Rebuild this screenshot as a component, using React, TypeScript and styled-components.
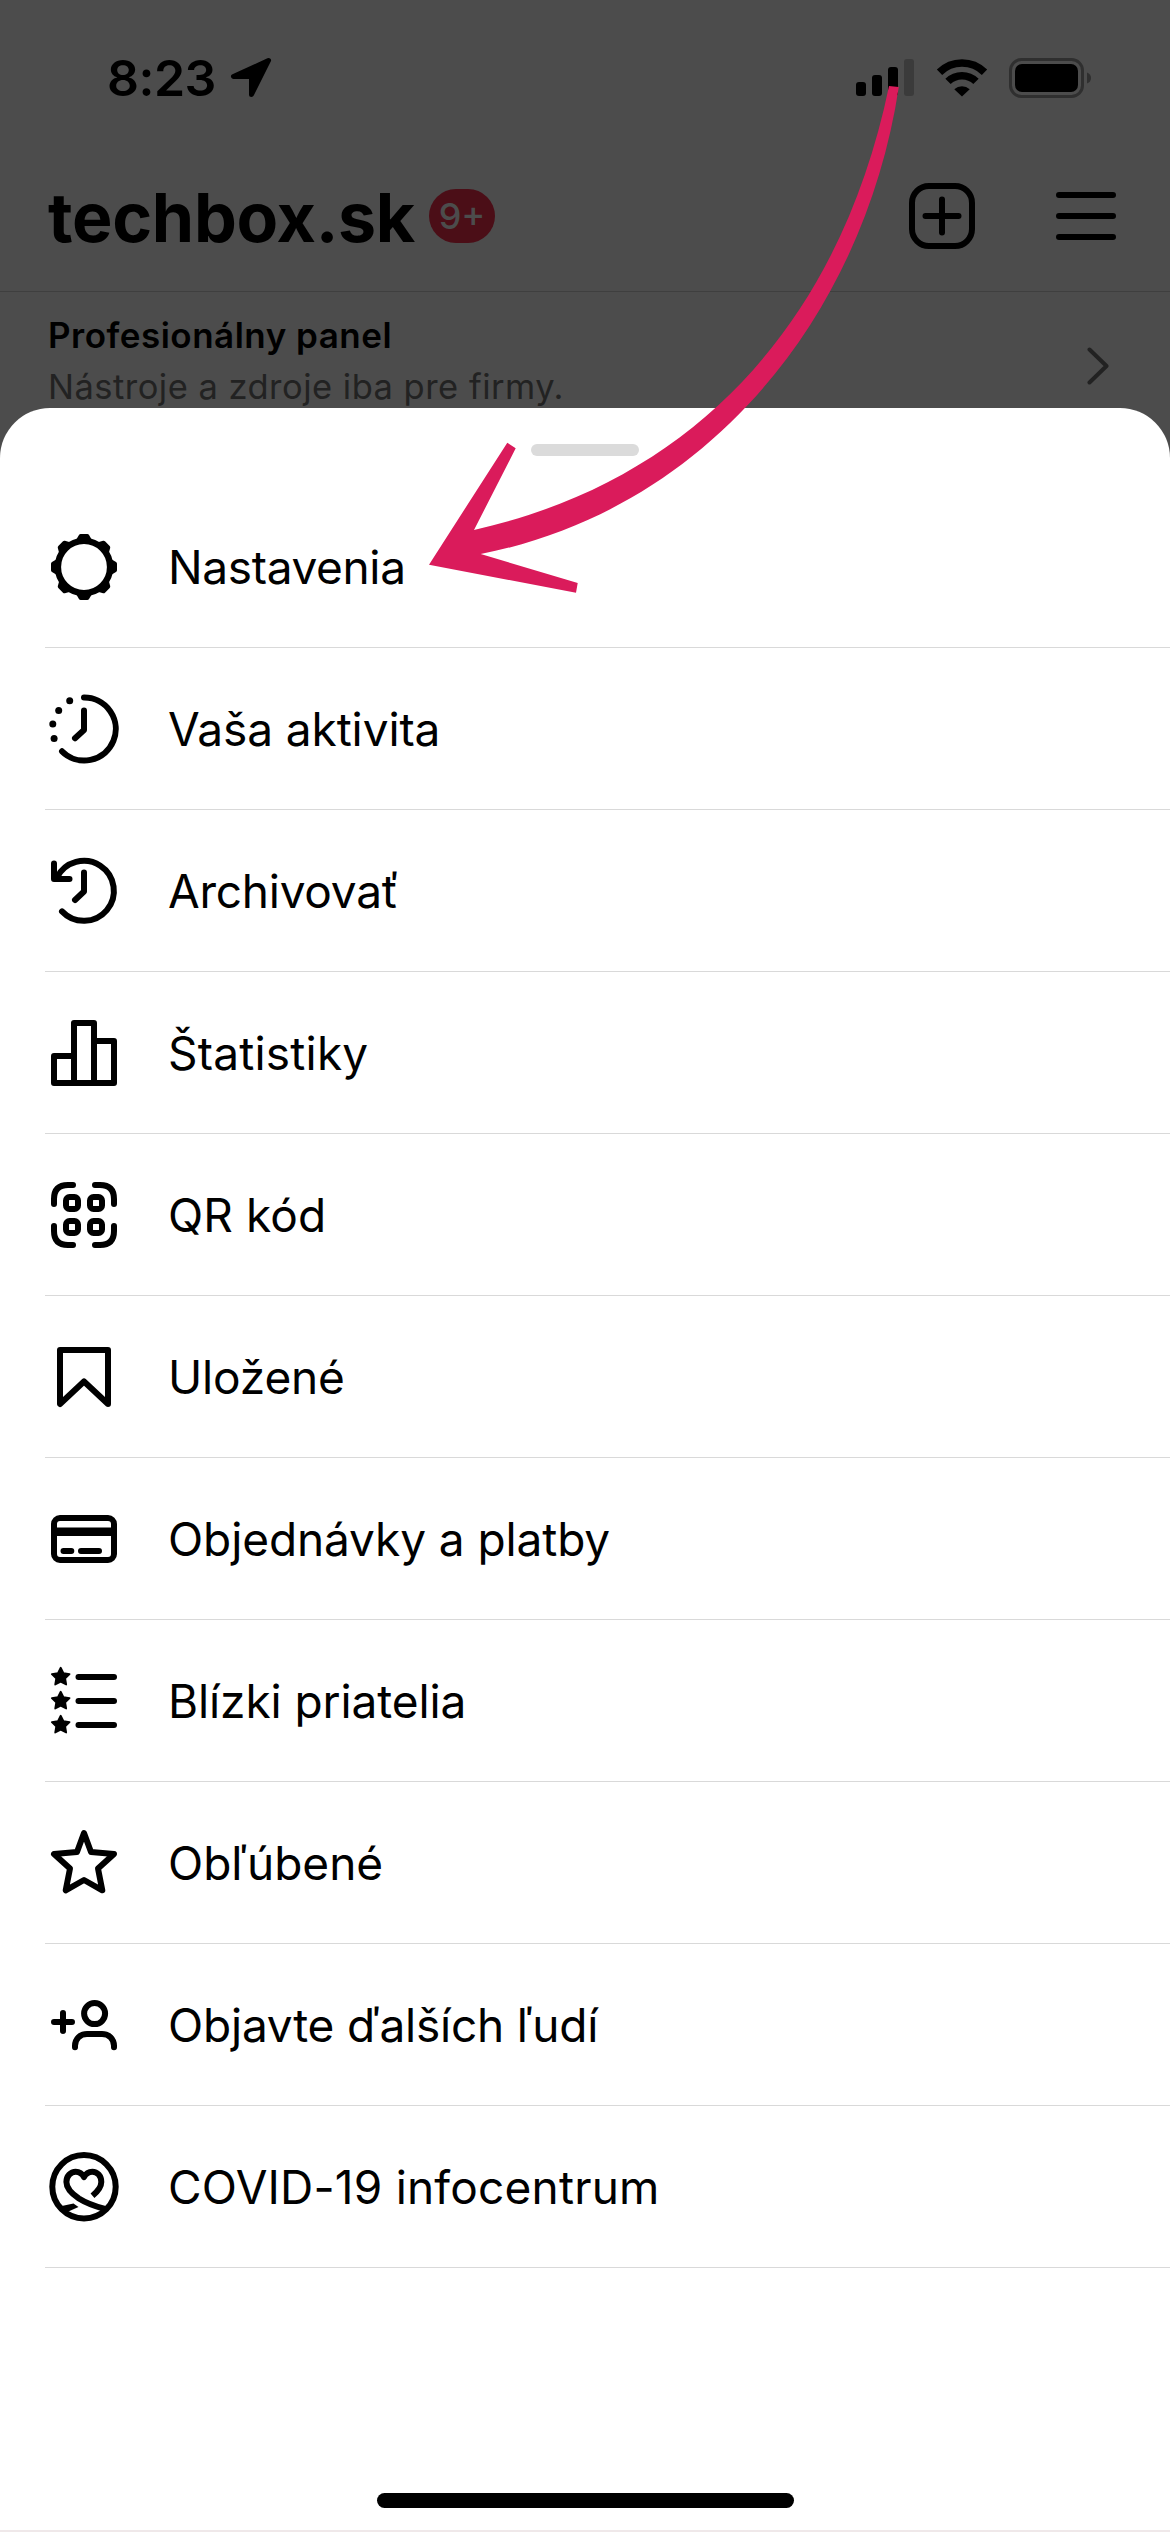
import React from 'react';
import styled, { createGlobalStyle } from 'styled-components';

const GlobalStyle = createGlobalStyle`
  * { box-sizing: border-box; }
  body { margin: 0; background: #4c4c4c; }
`;

const Screen = styled.div`
  position: relative;
  display: flex;
  flex-direction: column;
  width: 1170px;
  height: 2532px;
  overflow: hidden;
  background: #4c4c4c;
  color: #000;
  font-family: Inter, 'Liberation Sans', sans-serif;
`;

const Backdrop = styled.div`
  display: flex;
  flex-direction: column;
  flex: none;
  height: 408px;
  overflow: hidden;
`;

const StatusBar = styled.div`
  display: flex;
  flex: none;
  align-items: center;
  justify-content: space-between;
  height: 156px;
  padding: 0 78px 0 107px;
`;

const StatusGroup = styled.div<{ $gap: number }>`
  display: flex;
  align-items: center;
  gap: ${(p) => p.$gap}px;
`;

const Clock = styled.span`
  font-size: 50px;
  font-weight: 600;
  line-height: 60px;
  letter-spacing: -0.5px;
`;

const Header = styled.header`
  display: flex;
  flex: none;
  align-items: center;
  justify-content: space-between;
  height: 136px;
  padding: 0 54px 15px 48px;
  border-bottom: 1px solid #3f3f3f;
`;

const Account = styled.div`
  display: flex;
  align-items: center;
  gap: 14px;
`;

const AccountName = styled.h1`
  margin: 0;
  padding-top: 2px;
  font-size: 68px;
  font-weight: 700;
  line-height: 80px;
  letter-spacing: -0.3px;
`;

const Badge = styled.span`
  display: flex;
  align-items: center;
  justify-content: center;
  width: 66px;
  height: 54px;
  border-radius: 27px;
  background: #4b0e17;
  color: #4c4c4c;
  font-size: 36px;
  font-weight: 500;
`;

const Actions = styled.div`
  display: flex;
  align-items: center;
  gap: 81px;
`;

const Panel = styled.section`
  display: flex;
  flex: 1;
  align-items: flex-start;
  justify-content: space-between;
  padding: 18px 61px 0 48px;
`;

const PanelText = styled.div`
  display: flex;
  flex-direction: column;
`;

const PanelTitle = styled.span`
  font-size: 35px;
  font-weight: 600;
  line-height: 51px;
  letter-spacing: 0.5px;
`;

const PanelNote = styled.span`
  color: #222;
  font-size: 34.5px;
  line-height: 51px;
  letter-spacing: 0.48px;
`;

const Sheet = styled.main`
  display: flex;
  flex-direction: column;
  align-items: center;
  flex: 1;
  border-radius: 50px 50px 0 0;
  border-bottom: 2px solid #efe8e9;
  background: #fff;
`;

const Handle = styled.div`
  flex: none;
  width: 108px;
  height: 12px;
  margin: 36px 0 30px;
  border-radius: 6px;
  background: #dbdbdb;
`;

const Menu = styled.ul`
  flex: 1;
  width: 100%;
  margin: 0;
  padding: 0 0 0 45px;
  list-style: none;
`;

const MenuItem = styled.li`
  display: flex;
  align-items: center;
  gap: 48px;
  height: 162px;
  padding: 1px 0 0 3px;
  border-bottom: 1px solid #d9d9d9;
`;

const Label = styled.span<{ $track: number }>`
  font-size: 46px;
  line-height: 60px;
  letter-spacing: ${(p) => p.$track}px;
  white-space: nowrap;
`;

const HomeIndicator = styled.div`
  flex: none;
  width: 417px;
  height: 15px;
  margin-bottom: 22px;
  border-radius: 8px;
  background: #000;
`;

const LineIcon = styled.svg`
  flex: none;
  display: block;
  fill: none;
  stroke: #000;
  stroke-width: 6;
  stroke-linecap: round;
  stroke-linejoin: round;
`;

const Glyph = styled.svg`
  flex: none;
  display: block;
`;

const Chevron = styled(Glyph)`
  margin-top: 37px;
`;

const Annotation = styled.svg`
  position: absolute;
  top: 0;
  left: 0;
  pointer-events: none;
`;

const starPoints = (cx: number, cy: number, outer: number, inner: number) =>
  Array.from({ length: 10 }, (_, i) => {
    const r = i % 2 ? inner : outer;
    const a = (i * Math.PI) / 5;
    return `${(cx + r * Math.sin(a)).toFixed(2)},${(cy - r * Math.cos(a)).toFixed(2)}`;
  }).join(' ');

const icons: Record<string, React.ReactNode> = {
  gear: (
    <>
      <circle cx="36" cy="36" r="26.1" strokeWidth="6.4" />
      {[0, 45, 90, 135, 180, 225, 270, 315].map((a) => (
        <path
          key={a}
          d="M32.7 5h6.6l2.6 4.6 1 .8H29l1-.8Z"
          fill="#000"
          strokeWidth="4"
          transform={`rotate(${a} 36 36)`}
        />
      ))}
    </>
  ),
  activity: (
    <>
      <path d="M36 4.5A31.5 31.5 0 1 1 14 58.3" />
      <path d="M36 17.5V37l-9 8.3" />
      <g fill="#000" stroke="none">
        <circle cx="21.7" cy="7.7" r="3.5" />
        <circle cx="10.7" cy="17.4" r="3.5" />
        <circle cx="4.8" cy="31" r="3.5" />
        <circle cx="6.1" cy="45.5" r="3.5" />
      </g>
    </>
  ),
  archive: (
    <>
      <path d="M9 22.5A30 30 0 1 1 14 56.4" />
      <path d="M6 8.5V24h15.5" />
      <path d="M36 17.5v19L27 45" />
    </>
  ),
  stats: (
    <>
      <path d="M6 39h20v27H6Z" />
      <path d="M26 6h20v60H26Z" />
      <path d="M46 24h20v42H46Z" />
    </>
  ),
  qr: (
    <>
      <path d="M6 25v-5Q6 6 20 6h5M47 6h5q14 0 14 14v5M66 47v5q0 14-14 14h-5M25 66h-5Q6 66 6 52v-5" />
      <rect x="18" y="18" width="12" height="12" rx="3.5" />
      <rect x="42" y="18" width="12" height="12" rx="3.5" />
      <rect x="18" y="42" width="12" height="12" rx="3.5" />
      <rect x="42" y="42" width="12" height="12" rx="3.5" />
    </>
  ),
  bookmark: <path d="M12 9h48v54L36 40.5 12 63Z" />,
  card: (
    <>
      <rect x="6" y="15" width="60" height="42" rx="6" />
      <path d="M6 28.8h60" strokeWidth="8.4" strokeLinecap="butt" />
      <path d="M15.5 48h7.8M33 48h18" />
    </>
  ),
  friends: (
    <>
      {[12, 36, 60].map((y) => (
        <React.Fragment key={y}>
          <path d={`M30.5 ${y}H66`} />
          <polygon
            points={starPoints(12.7, y, 9.3, 4.7)}
            fill="#000"
            style={{ strokeWidth: 1.8 }}
          />
        </React.Fragment>
      ))}
    </>
  ),
  star: (
    <path d="M36 6l7 19 23 2-16 14.5 4.3 21.8L36 53 17.7 63.3 22 41.5 6 27l23-2Z" />
  ),
  discover: (
    <>
      <path d="M6 33h18M15 24v18" />
      <circle cx="46.6" cy="24.6" r="10.5" />
      <path d="M27 58.2v-1.4C27 50 32 45 39 45h15c7 0 12 5 12 11.8v1.4" />
    </>
  ),
  covid: (
    <>
      <circle cx="36" cy="35.8" r="31.7" />
      <path
        d="M44.5 44.8C49 41 53.3 37 53.3 31c0-6-4-10.3-9-10.3-4 0-6.5 2-8.3 5.3-1.8-3.3-4.3-5.3-8.3-5.3-5 0-9.3 4.3-9.3 10.3 0 7 6.500 12.5 12.5 16.5C38 52 46 55 57 58"
        strokeLinecap="butt"
      />
      <path d="M9 56l16.5-3.6 5 3.7-9 3.9-9 .5Z" fill="#000" stroke="none" />
    </>
  ),
};

const items = [
  { icon: 'gear', label: 'Nastavenia', track: -0.35 },
  { icon: 'activity', label: 'Vaša aktivita', track: -0.1 },
  { icon: 'archive', label: 'Archivovať', track: -0.25 },
  { icon: 'stats', label: 'Štatistiky', track: 0.2 },
  { icon: 'qr', label: 'QR kód', track: 0.1 },
  { icon: 'bookmark', label: 'Uložené', track: -0.15 },
  { icon: 'card', label: 'Objednávky a platby', track: -0.1 },
  { icon: 'friends', label: 'Blízki priatelia', track: -0.1 },
  { icon: 'star', label: 'Obľúbené', track: 0 },
  { icon: 'discover', label: 'Objavte ďalších ľudí', track: -0.2 },
  { icon: 'covid', label: 'COVID-19 infocentrum', track: 0.2 },
];

const LocationArrow = () => (
  <Glyph width="42" height="42" viewBox="0 0 42 42">
    <path
      d="M38.5 3.5 3.5 19.5h18v18Z"
      stroke="#000"
      strokeWidth="5"
      strokeLinejoin="round"
    />
  </Glyph>
);

const Signal = () => (
  <Glyph width="58" height="40" viewBox="0 0 58 40">
    <rect x="0" y="24" width="10" height="14" rx="3" />
    <rect x="16" y="17" width="10" height="21" rx="3" />
    <rect x="32" y="9" width="10" height="29" rx="3" />
    <rect x="48" y="1" width="10" height="37" rx="3" fill="#3b3b3b" />
  </Glyph>
);

const Wifi = () => (
  <Glyph width="52" height="40" viewBox="0 0 52 40">
    <g fill="none" stroke="#000" strokeWidth="7.6">
      <path d="M3.5 14.2a32 32 0 0 1 45 0" />
      <path d="M12 23.4a20 20 0 0 1 28 0" />
    </g>
    <path d="M18.3 31.2a11.5 11.5 0 0 1 15.4 0L26 38.6Z" />
  </Glyph>
);

const Battery = () => (
  <Glyph width="83" height="40" viewBox="0 0 83 40">
    <rect x="1.5" y="1.5" width="72" height="37" rx="11" fill="none" stroke="#2f2f2f" strokeWidth="3" />
    <rect x="6" y="6" width="63" height="28" rx="7" />
    <path d="M78 14.5q4 1.5 4 5.5t-4 5.5Z" fill="#2f2f2f" />
  </Glyph>
);

export default function App() {
  return (
    <Screen>
      <GlobalStyle />
      <Backdrop>
        <StatusBar>
          <StatusGroup $gap={14}>
            <Clock>8:23</Clock>
            <LocationArrow />
          </StatusGroup>
          <StatusGroup $gap={21.5}>
            <Signal />
            <Wifi />
            <Battery />
          </StatusGroup>
        </StatusBar>
        <Header>
          <Account>
            <AccountName>techbox.sk</AccountName>
            <Badge>9+</Badge>
          </Account>
          <Actions>
            <LineIcon width="66" height="66" viewBox="0 0 66 66">
              <rect x="3" y="3" width="60" height="60" rx="17" />
              <path d="M33 16.5v33M16.5 33h33" />
            </LineIcon>
            <LineIcon width="60" height="66" viewBox="0 0 60 66">
              <path d="M3 12h54M3 33h54M3 54h54" />
            </LineIcon>
          </Actions>
        </Header>
        <Panel>
          <PanelText>
            <PanelTitle>Profesionálny panel</PanelTitle>
            <PanelNote>Nástroje a zdroje iba pre firmy.</PanelNote>
          </PanelText>
          <Chevron width="22" height="38" viewBox="0 0 22 38">
            <path
              d="M2.5 2.5 19.5 19l-17 16.5"
              fill="none"
              stroke="#222"
              strokeWidth="4"
              strokeLinecap="round"
              strokeLinejoin="round"
            />
          </Chevron>
        </Panel>
      </Backdrop>
      <Sheet>
        <Handle />
        <Menu>
          {items.map((item) => (
            <MenuItem key={item.icon}>
              <LineIcon width="72" height="72" viewBox="0 0 72 72">
                {icons[item.icon]}
              </LineIcon>
              <Label $track={item.track}>{item.label}</Label>
            </MenuItem>
          ))}
        </Menu>
        <HomeIndicator />
      </Sheet>
      <Annotation width="1170" height="2532" viewBox="0 0 1170 2532">
        <path
          fill="#da1b5b"
          d="M889 86C842 314 701 479 474 530L515.7 448.3 507.3 442.7 429 564.7 576 592.7 577.7 583 480.7 554C707 510 864 316 898.8 87Z"
        />
      </Annotation>
    </Screen>
  );
}
